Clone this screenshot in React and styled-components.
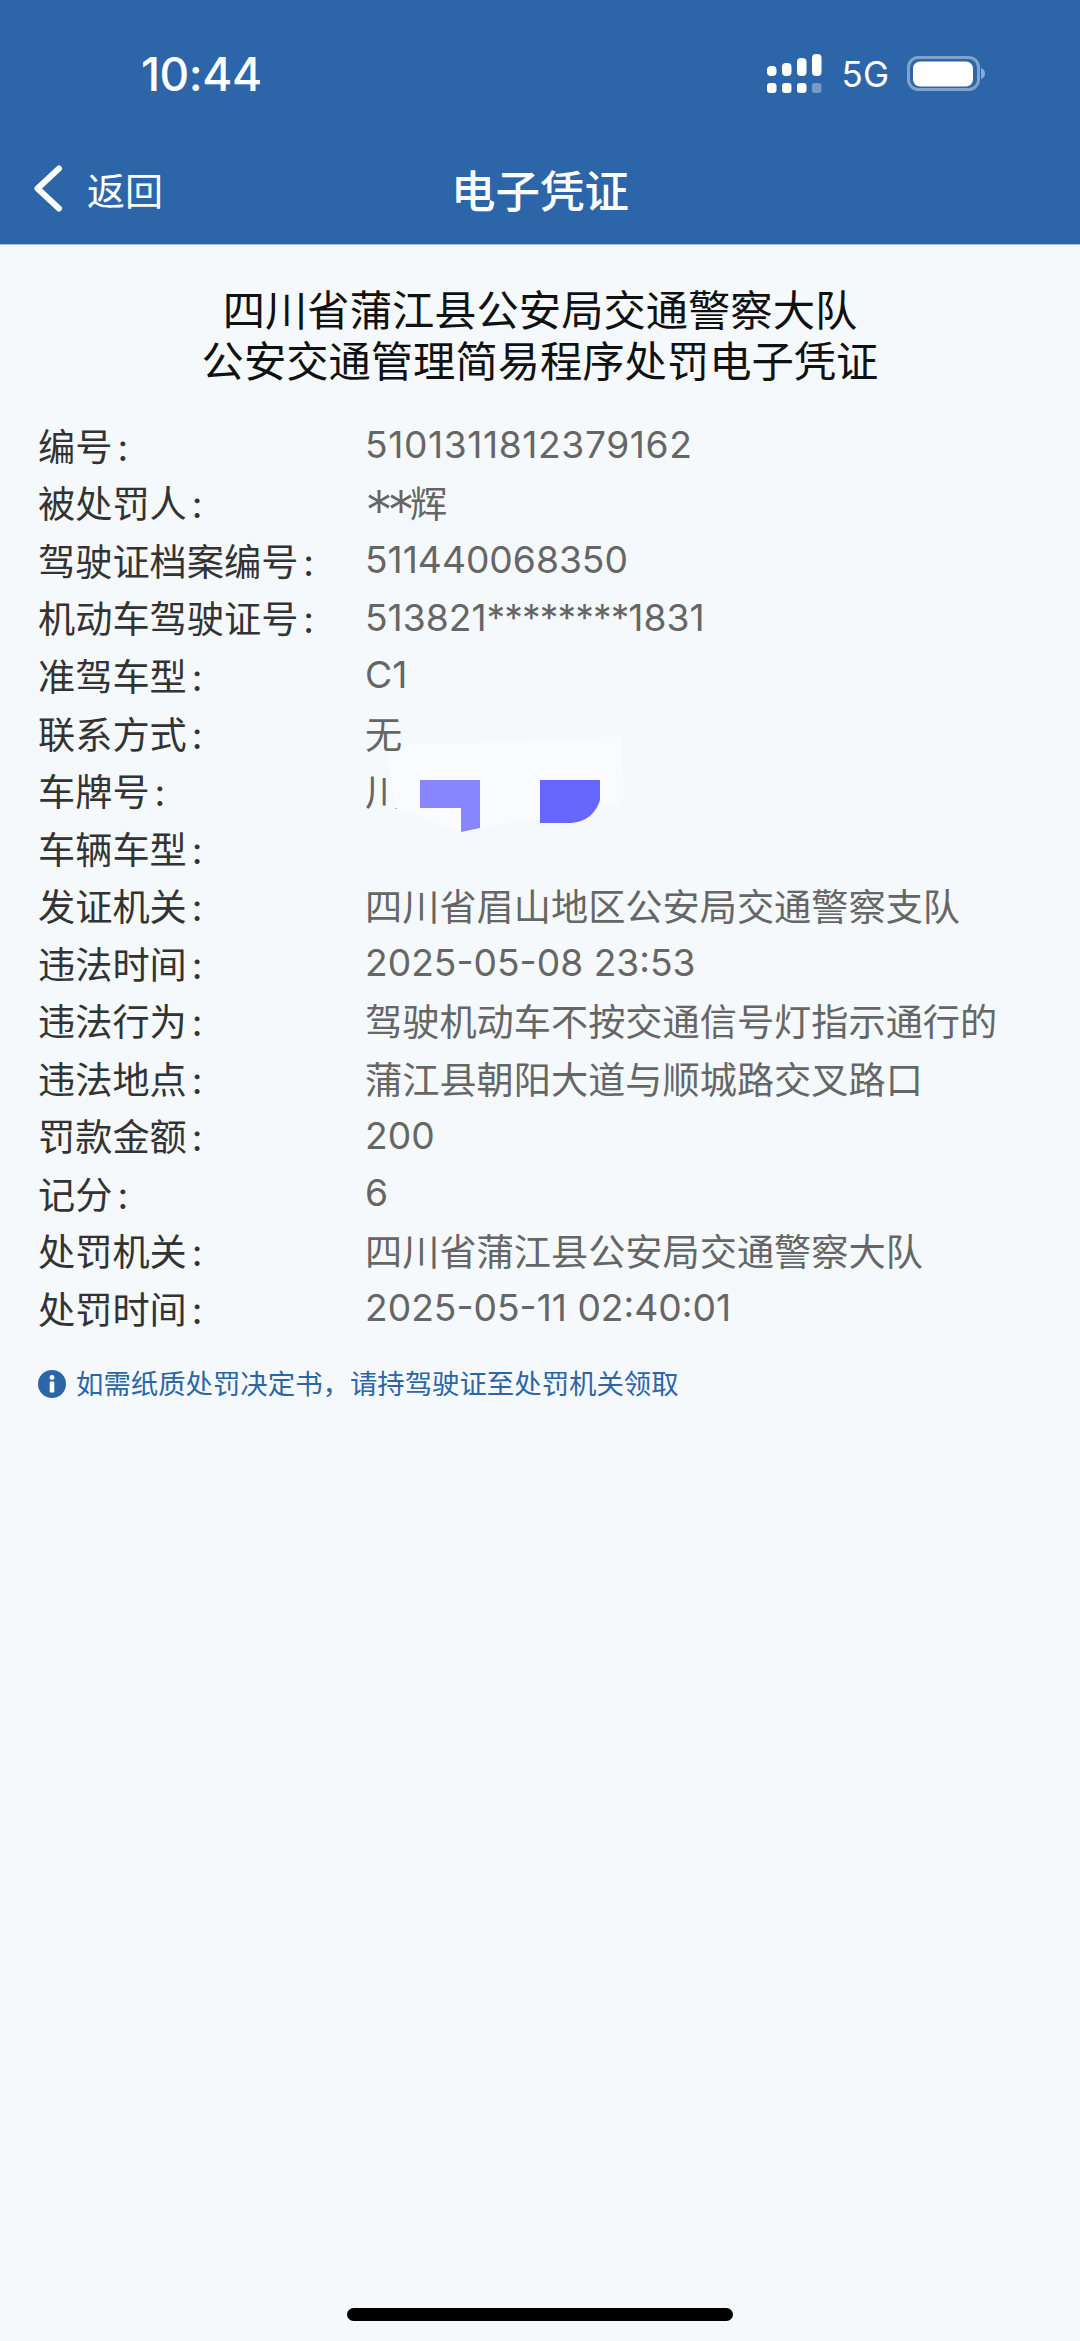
import styled, { createGlobalStyle } from "styled-components";

const GlobalStyle = createGlobalStyle`
  html, body {
    margin: 0;
    padding: 0;
    background: #f5f9fb;
  }
`;

const FONT = `"Inter", "Noto Sans CJK SC", sans-serif`;
const BLUE = "#2c65a8";

const Page = styled.div`
  width: 1080px;
  height: 2341px;
  display: flex;
  flex-direction: column;
  overflow: hidden;
  background: #f5f9fb;
  font-family: ${FONT};
`;

const Header = styled.header`
  height: 245px;
  flex: none;
  background: ${BLUE};
  color: #fff;
  border-bottom: 1px solid #a9c4e2;
  box-sizing: border-box;
`;

const StatusBar = styled.div`
  height: 145px;
  display: flex;
  align-items: flex-start;
  justify-content: space-between;
  padding: 50px 95px 0 141px;
  box-sizing: border-box;
`;

const Clock = styled.div`
  font-size: 46px;
  line-height: 48px;
  font-weight: 500;
  letter-spacing: -0.5px;
`;

const StatusIcons = styled.div`
  display: flex;
  align-items: center;
  gap: 18px;
  margin-top: 2px;
`;

const Signal = styled.svg`
  margin-right: 2px;
`;

const NetworkLabel = styled.span`
  font-size: 35px;
  line-height: 40px;
  margin-top: 2px;
`;

const NavBar = styled.div`
  display: grid;
  grid-template-columns: 1fr auto 1fr;
  align-items: center;
  height: 60px;
  margin-top: 11px;
`;

const BackLink = styled.div`
  display: flex;
  align-items: center;
  gap: 24px;
  padding-left: 33px;
  font-size: 38px;
`;

const NavTitle = styled.div`
  font-size: 44.5px;
  font-weight: 500;
`;

const Content = styled.main`
  flex: 1;
  display: flex;
  flex-direction: column;
  padding: 40px 38px 0;
`;

const Heading = styled.h1`
  margin: 0;
  font-size: 42.3px;
  line-height: 51px;
  font-weight: 400;
  text-align: center;
  color: #111;
`;

const Rows = styled.div`
  display: grid;
  grid-auto-rows: 57.55px;
  margin-top: 29px;
`;

const Row = styled.div`
  display: grid;
  grid-template-columns: 327px 1fr;
  align-items: center;
  font-size: 37.2px;
`;

const Label = styled.div`
  color: #333;
`;

const Colon = styled.span`
  margin-left: 5px;
`;

const Value = styled.div`
  position: relative;
  color: #666;
  white-space: nowrap;
  min-height: 1em;
  letter-spacing: ${(p) => p.$spacing || "0"};
`;

// the masked part of a licence number runs a little tighter than the digits
const Masked = styled.span`
  letter-spacing: -0.9px;
`;

// asterisks next to a CJK name are large and sit on the middle of the line
const MaskedName = styled.span`
  font-size: 56px;
  font-weight: 300;
  line-height: 0;
  vertical-align: -13px;
  letter-spacing: -6px;
  margin-right: 1px;
`;

const Redaction = styled.svg`
  position: absolute;
  left: 23px;
  top: -28px;
`;

const Note = styled.div`
  display: flex;
  align-items: center;
  gap: 10px;
  margin-top: 31px;
  font-size: 27.4px;
  line-height: 32px;
  color: ${BLUE};
`;

const HomeBar = styled.div`
  width: 386px;
  height: 13px;
  margin: auto auto 20px;
  border-radius: 7px;
  background: #000;
`;

const rows = [
  { label: "编号", value: "5101311812379162", spacing: "0.6px" },
  { label: "被处罚人", value: <><MaskedName>**</MaskedName>辉</> },
  { label: "驾驶证档案编号", value: "511440068350" },
  { label: "机动车驾驶证号", value: <>513821<Masked>********</Masked>1831</> },
  { label: "准驾车型", value: "C1" },
  { label: "联系方式", value: "无" },
  { label: "车牌号", value: "川", covered: true },
  { label: "车辆车型", value: "" },
  { label: "发证机关", value: "四川省眉山地区公安局交通警察支队" },
  { label: "违法时间", value: "2025-05-08 23:53" },
  { label: "违法行为", value: "驾驶机动车不按交通信号灯指示通行的" },
  { label: "违法地点", value: "蒲江县朝阳大道与顺城路交叉路口" },
  { label: "罚款金额", value: "200" },
  { label: "记分", value: "6" },
  { label: "处罚机关", value: "四川省蒲江县公安局交通警察大队" },
  { label: "处罚时间", value: "2025-05-11 02:40:01" },
];

// 5G signal: four short lower dots and four rising bars, the last dot dimmed
function SignalIcon() {
  const xs = [0, 15, 30, 45];
  const tops = [12, 9, 4, 0];
  return (
    <Signal width="55" height="39" viewBox="0 0 55 39" fill="#fff">
      {xs.map((x, i) => (
        <rect key={x} x={x} y={tops[i]} width="9.5" height={22 - tops[i]} rx="4" />
      ))}
      {xs.map((x, i) => (
        <rect key={x} x={x} y="29" width="9.5" height="10" rx="3" opacity={i === 3 ? 0.35 : 1} />
      ))}
    </Signal>
  );
}

function BatteryIcon() {
  return (
    <svg width="78" height="35" viewBox="0 0 78 35">
      <rect x="1.5" y="1.5" width="70" height="32" rx="10" fill="none" stroke="#fff" strokeOpacity="0.4" strokeWidth="3" />
      <rect x="6" y="5.5" width="60" height="25" rx="7" fill="#fff" />
      <path d="M74 12 C77 13 78 15 78 17.5 C78 20 77 22 74 23 Z" fill="#fff" fillOpacity="0.45" />
    </svg>
  );
}

function ChevronIcon() {
  return (
    <svg width="30" height="47" viewBox="0 0 30 47" fill="none">
      <path d="M26 3.5 L4.5 23.5 L26 43.5" stroke="#fff" strokeWidth="6" strokeLinecap="round" strokeLinejoin="round" />
    </svg>
  );
}

function InfoIcon() {
  return (
    <svg width="28" height="28" viewBox="0 0 28 28">
      <circle cx="14" cy="14" r="14" fill={BLUE} />
      <circle cx="14" cy="7.5" r="2.4" fill="#fff" />
      <rect x="11.7" y="11.5" width="4.6" height="11" rx="1" fill="#fff" />
    </svg>
  );
}

// pasted-over plate number: pale patch with two blue marks
function PlateCover() {
  return (
    <Redaction width="236" height="98" viewBox="0 0 236 98">
      <path d="M0 25 Q8 15 24 9 L160 6 L234 1 L235 65 L212 72 L92 93 L74 97 L40 85 L7 73 Z" fill="#fafbfe" />
      <path d="M32 45 H92 V93 L73 97 V73 H32 Z" fill="#8786ff" />
      <path d="M152 45 H212 V65 C208 78 198 88 180 88 H152 Z" fill="#6766ff" />
    </Redaction>
  );
}

export default function App() {
  return (
    <Page>
      <GlobalStyle />
      <Header>
        <StatusBar>
          <Clock>10:44</Clock>
          <StatusIcons>
            <SignalIcon />
            <NetworkLabel>5G</NetworkLabel>
            <BatteryIcon />
          </StatusIcons>
        </StatusBar>
        <NavBar>
          <BackLink>
            <ChevronIcon />
            返回
          </BackLink>
          <NavTitle>电子凭证</NavTitle>
        </NavBar>
      </Header>
      <Content>
        <Heading>
          四川省蒲江县公安局交通警察大队
          <br />
          公安交通管理简易程序处罚电子凭证
        </Heading>
        <Rows>
          {rows.map(({ label, value, spacing, covered }) => (
            <Row key={label}>
              <Label>
                {label}
                <Colon>:</Colon>
              </Label>
              <Value $spacing={spacing}>
                {value}
                {covered && <PlateCover />}
              </Value>
            </Row>
          ))}
        </Rows>
        <Note>
          <InfoIcon />
          如需纸质处罚决定书，请持驾驶证至处罚机关领取
        </Note>
        <HomeBar />
      </Content>
    </Page>
  );
}
